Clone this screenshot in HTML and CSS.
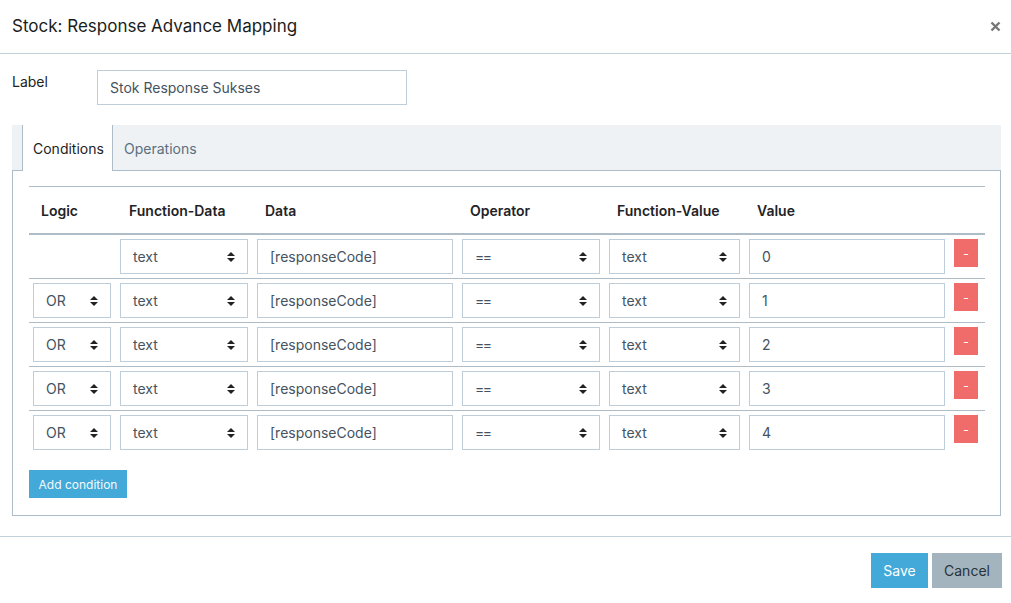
FILE: index.html
```html
<!DOCTYPE html>
<html>
<head>
<meta charset="utf-8">
<link rel="stylesheet" href="styles.css">
</head>
<body>
<div class="modal">
  <div class="modal-header">
    <h1 class="modal-title">Stock: Response Advance Mapping</h1>
    <span class="close"><svg width="11" height="11" viewBox="0 0 11 11"><path d="M1.5 1.5L9.5 9.5M9.5 1.5L1.5 9.5" stroke="#777" stroke-width="2.4" stroke-linecap="butt"/></svg></span>
  </div>
  <div class="modal-body">
    <div class="form-row">
      <label class="form-label">Label</label>
      <div class="input label-input">Stok Response Sukses</div>
    </div>
    <div class="tabs">
      <div class="tab active">Conditions</div>
      <div class="tab">Operations</div>
    </div>
    <div class="tab-panel">
      <div class="table">
        <div class="row head">
          <div class="th">Logic</div>
          <div class="th">Function-Data</div>
          <div class="th">Data</div>
          <div class="th">Operator</div>
          <div class="th">Function-Value</div>
          <div class="th">Value</div>
          <div></div>
        </div>
        <div class="row">
          <div></div>
          <div class="input select">text<svg class="arr" width="8" height="10" viewBox="0 0 8 10"><path d="M4 0L8 4H0z M0 6H8L4 10z" fill="#222"/></svg></div>
          <div class="input">[responseCode]</div>
          <div class="input select"><span class="op">==</span><svg class="arr" width="8" height="10" viewBox="0 0 8 10"><path d="M4 0L8 4H0z M0 6H8L4 10z" fill="#222"/></svg></div>
          <div class="input select">text<svg class="arr" width="8" height="10" viewBox="0 0 8 10"><path d="M4 0L8 4H0z M0 6H8L4 10z" fill="#222"/></svg></div>
          <div class="input">0</div>
          <div class="btn-del">-</div>
        </div>
        <div class="row">
          <div class="input select">OR<svg class="arr" width="8" height="10" viewBox="0 0 8 10"><path d="M4 0L8 4H0z M0 6H8L4 10z" fill="#222"/></svg></div>
          <div class="input select">text<svg class="arr" width="8" height="10" viewBox="0 0 8 10"><path d="M4 0L8 4H0z M0 6H8L4 10z" fill="#222"/></svg></div>
          <div class="input">[responseCode]</div>
          <div class="input select"><span class="op">==</span><svg class="arr" width="8" height="10" viewBox="0 0 8 10"><path d="M4 0L8 4H0z M0 6H8L4 10z" fill="#222"/></svg></div>
          <div class="input select">text<svg class="arr" width="8" height="10" viewBox="0 0 8 10"><path d="M4 0L8 4H0z M0 6H8L4 10z" fill="#222"/></svg></div>
          <div class="input">1</div>
          <div class="btn-del">-</div>
        </div>
        <div class="row">
          <div class="input select">OR<svg class="arr" width="8" height="10" viewBox="0 0 8 10"><path d="M4 0L8 4H0z M0 6H8L4 10z" fill="#222"/></svg></div>
          <div class="input select">text<svg class="arr" width="8" height="10" viewBox="0 0 8 10"><path d="M4 0L8 4H0z M0 6H8L4 10z" fill="#222"/></svg></div>
          <div class="input">[responseCode]</div>
          <div class="input select"><span class="op">==</span><svg class="arr" width="8" height="10" viewBox="0 0 8 10"><path d="M4 0L8 4H0z M0 6H8L4 10z" fill="#222"/></svg></div>
          <div class="input select">text<svg class="arr" width="8" height="10" viewBox="0 0 8 10"><path d="M4 0L8 4H0z M0 6H8L4 10z" fill="#222"/></svg></div>
          <div class="input">2</div>
          <div class="btn-del">-</div>
        </div>
        <div class="row">
          <div class="input select">OR<svg class="arr" width="8" height="10" viewBox="0 0 8 10"><path d="M4 0L8 4H0z M0 6H8L4 10z" fill="#222"/></svg></div>
          <div class="input select">text<svg class="arr" width="8" height="10" viewBox="0 0 8 10"><path d="M4 0L8 4H0z M0 6H8L4 10z" fill="#222"/></svg></div>
          <div class="input">[responseCode]</div>
          <div class="input select"><span class="op">==</span><svg class="arr" width="8" height="10" viewBox="0 0 8 10"><path d="M4 0L8 4H0z M0 6H8L4 10z" fill="#222"/></svg></div>
          <div class="input select">text<svg class="arr" width="8" height="10" viewBox="0 0 8 10"><path d="M4 0L8 4H0z M0 6H8L4 10z" fill="#222"/></svg></div>
          <div class="input">3</div>
          <div class="btn-del">-</div>
        </div>
        <div class="row">
          <div class="input select">OR<svg class="arr" width="8" height="10" viewBox="0 0 8 10"><path d="M4 0L8 4H0z M0 6H8L4 10z" fill="#222"/></svg></div>
          <div class="input select">text<svg class="arr" width="8" height="10" viewBox="0 0 8 10"><path d="M4 0L8 4H0z M0 6H8L4 10z" fill="#222"/></svg></div>
          <div class="input">[responseCode]</div>
          <div class="input select"><span class="op">==</span><svg class="arr" width="8" height="10" viewBox="0 0 8 10"><path d="M4 0L8 4H0z M0 6H8L4 10z" fill="#222"/></svg></div>
          <div class="input select">text<svg class="arr" width="8" height="10" viewBox="0 0 8 10"><path d="M4 0L8 4H0z M0 6H8L4 10z" fill="#222"/></svg></div>
          <div class="input">4</div>
          <div class="btn-del">-</div>
        </div>
      </div>
      <div class="btn btn-add">Add condition</div>
    </div>
  </div>
  <div class="modal-footer">
    <div class="btn btn-save">Save</div>
    <div class="btn btn-cancel">Cancel</div>
  </div>
</div>
</body>
</html>
```
FILE: styles.css
```css
* { box-sizing: border-box; }
html, body { margin: 0; padding: 0; background: #fff; }
body {
  font-family: Inter, "Noto Sans", "Liberation Sans", sans-serif;
  font-size: 14px;
  color: #222;
}
.modal { width: 1011px; }
.modal-header {
  height: 54px;
  border-bottom: 1px solid #c3d1db;
  display: flex;
  align-items: center;
  justify-content: space-between;
  padding: 0 10px 1px 12px;
}
.modal-title {
  margin: 0;
  font-size: 17px;
  font-weight: 400;
  color: #1a1d20;
}
.close { display: flex; }
.modal-body { padding: 16px 10px 0 12px; }
.form-row { display: flex; align-items: flex-start; }
.form-label { width: 85px; padding-top: 3px; color: #222; }
.input {
  height: 35px;
  border: 1px solid #bfcdd8;
  padding: 0 12px;
  display: flex;
  align-items: center;
  color: #44535f;
  background: #fff;
}
.label-input { width: 310px; }
.tabs {
  margin-top: 20px;
  height: 46px;
  background: #eef2f5;
  border-bottom: 1px solid #aebcc7;
  display: flex;
  padding-left: 10px;
}
.tab {
  height: 46px;
  padding: 0 11px;
  display: flex;
  align-items: center;
  color: #5b6f7e;
  margin-bottom: -1px;
}
.tab.active {
  background: #fff;
  color: #222;
  border-left: 1px solid #aebcc7;
  border-right: 1px solid #aebcc7;
  padding: 0 10px;
  width: 91px;
}
.tab-panel {
  border: 1px solid #aebcc7;
  border-top: 0;
  padding: 15px 15px 16px 16px;
  height: 345px;
}
.table { border-top: 1px solid #aebcc7; }
.row {
  display: grid;
  grid-template-columns: 78px 128px 196px 138px 131px 196px 24px;
  column-gap: 9px;
  padding: 4px 7px 4px 4px;
  border-top: 1px solid #aebcc7;
  align-items: start;
}
.row.head {
  border-top: 0;
  border-bottom: 1px solid #aebcc7;
  padding-top: 0;
  padding-bottom: 0;
  height: 47px;
  align-items: center;
}
.th { font-weight: 600; padding-left: 8px; color: #1f2326; }
.th:nth-child(2) { padding-left: 9px; }
.select { justify-content: space-between; padding-right: 12px; }
.op { letter-spacing: -1.5px; }
.arr { flex: none; }
.btn-del {
  width: 24px;
  height: 28px;
  background: #f06c6a;
  color: #fff;
  font-size: 12px;
  display: flex;
  align-items: center;
  justify-content: center;
}
.btn {
  display: inline-flex;
  align-items: center;
  justify-content: center;
  color: #fff;
}
.btn-add {
  margin-top: 16px;
  width: 98px;
  height: 28px;
  background: #43a9d9;
  font-size: 12px;
  color: #f4fafd;
}
.modal-footer {
  margin-top: 20px;
  border-top: 1px solid #c3d1db;
  display: flex;
  justify-content: flex-end;
  gap: 4px;
  padding: 16px 9px 0 0;
}
.btn-save { width: 57px; height: 35px; background: #43a9d9; }
.btn-cancel { width: 70px; height: 35px; background: #a4b4be; color: #27323a; }
```
